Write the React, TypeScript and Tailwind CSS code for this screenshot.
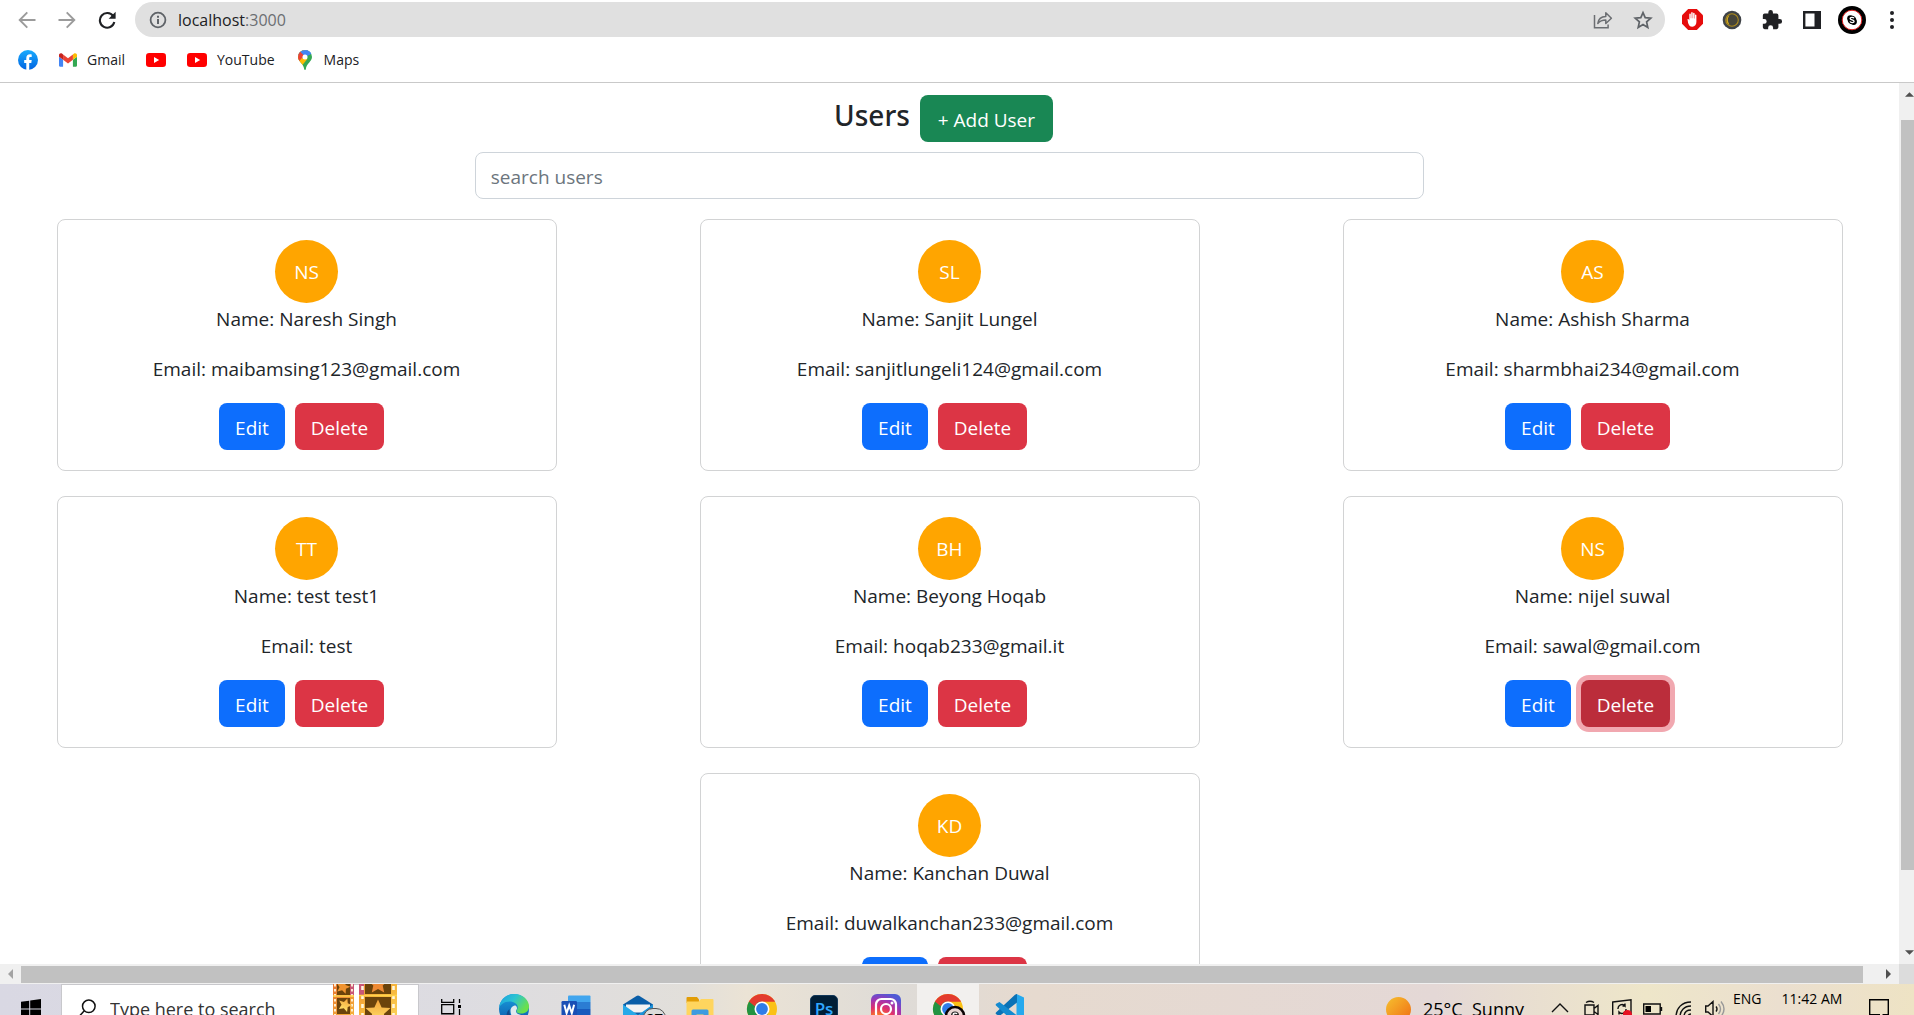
import React from "react";

type User = { initials: string; name: string; email: string; focused?: boolean };

const users: User[] = [
  { initials: "NS", name: "Naresh Singh", email: "maibamsing123@gmail.com" },
  { initials: "SL", name: "Sanjit Lungel", email: "sanjitlungeli124@gmail.com" },
  { initials: "AS", name: "Ashish Sharma", email: "sharmbhai234@gmail.com" },
  { initials: "TT", name: "test test1", email: "test" },
  { initials: "BH", name: "Beyong Hoqab", email: "hoqab233@gmail.it" },
  { initials: "NS", name: "nijel suwal", email: "sawal@gmail.com", focused: true },
  { initials: "KD", name: "Kanchan Duwal", email: "duwalkanchan233@gmail.com" },
];

/* ---------- browser icons ---------- */

function BackIcon({ flip = false }: { flip?: boolean }) {
  return (
    <svg viewBox="0 0 18 18" className={flip ? "size-[18px] -scale-x-100" : "size-[18px]"} fill="none" stroke="#9b9b9b" strokeWidth="1.9">
      <path d="M17.5 9H2M9.3 1.4 1.7 9l7.6 7.6" />
    </svg>
  );
}

function ReloadIcon() {
  return (
    <svg viewBox="0 0 18 18" className="size-[18px]">
      <path d="M15.2 5.2A7.3 7.3 0 1 0 16.3 11" fill="none" stroke="#1f2124" strokeWidth="2.1" />
      <path d="M17.6.8v7h-7z" fill="#1f2124" />
    </svg>
  );
}

function InfoIcon() {
  return (
    <svg viewBox="0 0 18 18" className="size-[18px]" fill="none" stroke="#5f6368" strokeWidth="1.8">
      <circle cx="9" cy="9" r="7.4" />
      <path d="M9 8v5M9 4.8v1.9" strokeWidth="2" />
    </svg>
  );
}

function ShareIcon() {
  return (
    <svg viewBox="0 0 20 20" className="size-5" fill="none" stroke="#6b6e72" strokeWidth="1.5">
      <path d="M1.500 5v12.800h13.600v-3.200" />
      <path d="M4.800 13.500c.5-4.600 3.500-7 8-7.100V2.800l5.600 5.400-5.600 5.300V10c-3.600 0-6 1-8 3.500z" strokeLinejoin="round" />
    </svg>
  );
}

function StarIcon() {
  return (
    <svg viewBox="0 0 20 20" className="size-5" fill="none" stroke="#5f6368" strokeWidth="1.7">
      <path d="m10 2.600 2.200 5.100 5.600.5-4.200 3.700 1.200 5.500L10 14.500l-4.800 2.900 1.200-5.500-4.200-3.700 5.600-.5z" />
    </svg>
  );
}

function AdBlockIcon() {
  return (
    <svg viewBox="0 0 21 21" className="size-[21px]">
      <path d="M6.200 0h8.600L21 6.200v8.600L14.800 21H6.200L0 14.800V6.200z" fill="#e60c0c" />
      <path d="M5.500 10.200c.7-.5 1.400.2 1.800 1.200V5.200c0-1.100 1.400-1.100 1.500 0v4h.4V3.900c0-1.100 1.500-1.100 1.500 0v5.300h.4V4.500c0-1 1.500-1 1.500 0v5h.4V6.200c0-1 1.400-1 1.400 0v6.600c0 3-1.500 4.900-4 4.900-2.800 0-3.400-1.600-4.300-3.700z" fill="#fff" />
    </svg>
  );
}

function MoonIcon() {
  return (
    <svg viewBox="0 0 20 20" className="size-5">
      <circle cx="10" cy="10" r="9.300" fill="#3f4347" />
      <circle cx="10" cy="10" r="6.300" fill="#45443a" stroke="#b08d1c" strokeWidth="1.100" />
      <path d="M7.500 5.200a5.300 5.300 0 0 0 0 9.600 8.500 8.500 0 0 1 0-9.600z" fill="#d0a71e" />
    </svg>
  );
}

function PuzzleIcon() {
  return (
    <svg viewBox="0 0 24 24" className="size-[22px]" fill="#202124">
      <path d="M20.500 11H19V7a2 2 0 0 0-2-2h-4V3.500a2.500 2.500 0 0 0-5 0V5H4a2 2 0 0 0-2 2v3.800h1.500a2.700 2.700 0 0 1 0 5.400H2V20a2 2 0 0 0 2 2h3.800v-1.500a2.700 2.700 0 0 1 5.400 0V22H17a2 2 0 0 0 2-2v-4h1.500a2.500 2.500 0 0 0 0-5z" />
    </svg>
  );
}

function PanelIcon() {
  return (
    <svg viewBox="0 0 18 18" className="size-[18px]">
      <path d="M1.200 1.200h15.600v15.600H1.200z" fill="#fff" stroke="#202124" strokeWidth="2.400" />
      <path d="M11.500 0H18v18h-6.500z" fill="#202124" />
    </svg>
  );
}

function ProfileIcon() {
  return (
    <svg viewBox="0 0 28 28" className="size-7">
      <circle cx="14" cy="14" r="14" fill="#000" />
      <circle cx="14" cy="14" r="9.800" fill="#fff" stroke="#e02020" strokeWidth="1" />
      <circle cx="12.300" cy="12.300" r="3.100" fill="#000" />
      <circle cx="15.800" cy="15.800" r="3.100" fill="#000" />
      <circle cx="14" cy="14" r="4.300" fill="#000" />
      <path d="M16 12.300c-.6-1.300-3.900-1.200-3.900.3 0 1.700 4 .9 4 2.800 0 1.500-3.600 1.500-4.100 0" fill="none" stroke="#fff" strokeWidth="1.300" />
    </svg>
  );
}

function FacebookIcon() {
  return (
    <svg viewBox="0 0 20 20" className="size-5">
      <defs>
        <linearGradient id="fb" x2="0" y2="1">
          <stop stopColor="#19acfe" />
          <stop offset="1" stopColor="#0163e0" />
        </linearGradient>
      </defs>
      <circle cx="10" cy="10" r="10" fill="url(#fb)" />
      <path d="M8.300 20v-7H6.200v-2.900h2.100V8.300c0-2.700 1.300-4 3.700-4 .7 0 1.300.1 1.700.2v2.400h-1.200c-1 0-1.300.5-1.300 1.400v1.800h2.500l-.4 2.900h-2.100v7z" fill="#fff" />
    </svg>
  );
}

function GmailIcon() {
  return (
    <svg viewBox="52 42 88 66" className="h-[14px] w-[18px]">
      <path fill="#4285f4" d="M58 108h14V74L52 59v43c0 3.320 2.690 6 6 6" />
      <path fill="#34a853" d="M120 108h14c3.320 0 6-2.690 6-6V59l-20 15" />
      <path fill="#fbbc04" d="M120 48v26l20-15v-8c0-7.420-8.470-11.650-14.400-7.200" />
      <path fill="#ea4335" d="M72 74V48l24 18 24-18v26L96 92" />
      <path fill="#c5221f" d="M52 51v8l20 15V48l-5.600-4.200c-5.940-4.450-14.400-.22-14.400 7.200" />
    </svg>
  );
}

function YouTubeIcon() {
  return (
    <svg viewBox="0 0 20 14" className="h-[14px] w-5">
      <rect width="20" height="14" rx="3.200" fill="#f00" />
      <path d="M8 4v6l5.200-3z" fill="#fff" />
    </svg>
  );
}

function MapsIcon() {
  return (
    <svg viewBox="0 0 14 20" className="h-5 w-[14px]">
      <defs>
        <clipPath id="pin">
          <path d="M7 0a7 7 0 0 1 7 7c0 4.500-5.600 6.500-6.200 12.300 0 .9-1.500.9-1.600 0C5.600 13.500 0 11.500 0 7a7 7 0 0 1 7-7z" />
        </clipPath>
      </defs>
      <g clipPath="url(#pin)">
        <path d="M0 0h14v20H0z" fill="#34a853" />
        <path d="M0 14.500 13 0H0z" fill="#fbbc04" />
        <path d="M0 0h14v3L7 7 5 9 0 5z" fill="#4285f4" />
        <path d="m0 2 2-.5 4 4L1 11.500H0z" fill="#ea4335" />
        <path d="M14 3.500V0H8l1 5-2 2z" fill="#4285f4" />
        <path d="m1 12 4-4.500 4.500 1.300L4 15.500z" fill="#fbbc04" />
      </g>
      <circle cx="7" cy="7" r="2.500" fill="#fff" />
    </svg>
  );
}

/* ---------- taskbar icons ---------- */

function WindowsIcon() {
  return (
    <svg viewBox="0 0 20 20" className="size-5" fill="#000">
      <path d="M0 2.800 8.200 1.700v7.800H0zM9.200 1.500 20 0v9.500H9.200zM0 10.500h8.200v7.800L0 17.200zM9.200 10.500H20V20L9.200 18.500z" />
    </svg>
  );
}

function SearchIcon() {
  return (
    <svg viewBox="0 0 18 20" className="h-5 w-[18px]" fill="none" stroke="#111" strokeWidth="1.500">
      <circle cx="10.800" cy="7.300" r="6.300" />
      <path d="M6.300 11.800 .6 18" />
    </svg>
  );
}

const starPoints = "0,-10 2.9,-3.600 10,-3.200 4.700,1.500 6.200,8.500 0,4.900 -6.200,8.500 -4.700,1.500 -10,-3.200 -2.900,-3.600";

function FilmStrip() {
  return (
    <svg viewBox="0 0 64 50" className="h-[50px] w-16">
      <defs>
        <linearGradient id="film" x2="1" y2="1">
          <stop stopColor="#e8732e" />
          <stop offset=".5" stopColor="#f6b53c" />
          <stop offset="1" stopColor="#ffe066" />
        </linearGradient>
        <linearGradient id="filmStar" x2="0" y2="1">
          <stop stopColor="#f3a23a" />
          <stop offset="1" stopColor="#ffe46b" />
        </linearGradient>
      </defs>
      <path d="M0 0h21v50H0zM26 0h38v50H26z" fill="url(#film)" />
      <path d="M17 0h4v11h-4zM26 0h5v12h-5z" fill="#c95776" />
      <path d="M4 0h13v11H4zM4 14h13v16H4zM32 0h26v10H32zM32 13h26v24H32z" fill="#6b430b" />
      <path d="M2 0v50M19 0v50" stroke="#fff7dd" strokeWidth="1.800" strokeDasharray="2.500 2.500" />
      <path d="M29.500 2v48M60.500 2v48" stroke="#fff7dd" strokeWidth="2.600" strokeDasharray="4 5" />
      <polygon points={starPoints} transform="translate(10 3) scale(.7) rotate(15)" fill="#f0932f" />
      <polygon points={starPoints} transform="translate(12 21) scale(.7) rotate(20)" fill="url(#filmStar)" />
      <polygon points={starPoints} transform="translate(45 0) scale(1)" fill="#ee8a34" />
      <polygon points={starPoints} transform="translate(45 28) scale(1.250)" fill="url(#filmStar)" />
      <path d="M0 12h21M26 11.500h38" stroke="#ffd24a" strokeWidth="1.500" />
    </svg>
  );
}

function TaskViewIcon() {
  return (
    <svg viewBox="0 0 20 20" className="size-5" fill="none" stroke="#000" strokeWidth="1.300">
      <path d="M.7 0v3.300h12V0M.7 5.700h12v9H.7zM.7 20v-3.500h12V20M18.500 0v4M18.500 10v10" />
      <path d="M17 6h3v3h-3z" fill="#000" stroke="none" />
    </svg>
  );
}

function EdgeIcon() {
  return (
    <svg viewBox="0 0 30 30" className="size-[30px]">
      <defs>
        <linearGradient id="edgeTop" x2="1" y2=".5">
          <stop stopColor="#1b9de2" />
          <stop offset=".5" stopColor="#2bc3d2" />
          <stop offset="1" stopColor="#6be04a" />
        </linearGradient>
        <linearGradient id="edgeSide" x2="0" y2="1">
          <stop stopColor="#1aa0e0" />
          <stop offset="1" stopColor="#0c56a8" />
        </linearGradient>
      </defs>
      <circle cx="15" cy="15" r="15" fill="url(#edgeSide)" />
      <path d="M0 14C1 5 7.500 0 15 0c9 0 15 6 15 12.500 0 4.500-3.500 7-7.500 7-4 0-5-1.500-5-2.500s1.200-1.700 1.200-4C18.700 10 15 7.500 10.500 7.500 5 7.500 1 11 0 14z" fill="url(#edgeTop)" />
      <path d="M11.500 17c0-4 3-5.500 5-5.500 1.500 1 2 3 1 4.200-1.500 2 0 4.500 5.500 5.500l5 1-5 5c-7 .5-11.500-4.500-11.500-10.200z" fill="#dfe9ee" />
      <path d="M10.500 15c-1 8 5 13 12 12a15 15 0 0 1-9 3C8 28 5 20 10.500 15z" fill="#114a8b" />
    </svg>
  );
}

function WordIcon() {
  return (
    <svg viewBox="0 0 30 30" className="size-[30px]">
      <path d="M8 1.500h20.500a1 1 0 0 1 1 1V8H7V2.500a1 1 0 0 1 1-1z" fill="#41a5ee" />
      <path d="M7 8h22.500v7H7z" fill="#2b7cd3" />
      <path d="M7 15h22.500v7H7z" fill="#185abd" />
      <path d="M7 22h22.500v6H7z" fill="#103f91" />
      <rect x=".5" y="7" width="15.500" height="16" rx="1.300" fill="#1a4fb5" />
      <path d="m3.300 10.800 2.300 8.400 2.600-7.700 2.600 7.700 2.300-8.400" fill="none" stroke="#fff" strokeWidth="2" />
    </svg>
  );
}

function MailIcon() {
  return (
    <span className="relative block size-[30px]">
      <svg viewBox="0 0 30 30" className="size-[30px]">
        <path d="M0 10.500 13.500 2a3 3 0 0 1 3 0L30 10.500V27H0z" fill="#0a5ea8" />
        <path d="M3 10.500h24v8H3z" fill="#f3f3f3" />
        <path d="M0 10.500 15 21 30 10.500V27H0z" fill="#27a9e8" />
        <path d="M30 10.500 8 27h22z" fill="#1c8fd6" />
      </svg>
      <span className="absolute left-5 top-[14px] flex h-[20px] w-[23px] items-center justify-center rounded-full border border-[#555] bg-[#dcdcda] text-[15px] font-semibold leading-4 text-black">
        27
      </span>
    </span>
  );
}

function FolderIcon() {
  return (
    <svg viewBox="0 0 30 30" className="size-[30px]">
      <path d="M1.500 4a1 1 0 0 1 1-1H12l2 2.500V9H1.500z" fill="#e29d06" />
      <path d="M1.500 7.500h12L16 5h11.500a1 1 0 0 1 1 1v20h-27z" fill="#ffd55e" />
      <path d="M6.500 26V17a1.500 1.500 0 0 1 1.500-1.500h14a1.500 1.500 0 0 1 1.500 1.500v9h-5v-5.500h-7V26z" fill="#3d9be0" />
    </svg>
  );
}

function ChromeIcon({ badge = false }: { badge?: boolean }) {
  return (
    <svg viewBox="0 0 30 30" className="size-[30px] overflow-visible">
      <circle cx="15" cy="15" r="15" fill="#fbc116" />
      <path d="M15 15 2 7.500A15 15 0 0 1 28 7.500H15z" fill="#e33b2e" />
      <path d="M2 7.500A15 15 0 0 0 15 30l6.500-11.500L15 15z" fill="#229342" />
      <path d="M2 7.500 8.500 18.700 15 15V7.500z" fill="#229342" />
      <path d="M2 7.500C7 0 23 0 28 7.500H15a7.500 7.500 0 0 0-7 5z" fill="#e33b2e" />
      <circle cx="15" cy="15" r="7.500" fill="#fff" />
      <circle cx="15" cy="15" r="5.900" fill="#2f7de8" />
      {badge && (
        <>
          <circle cx="22" cy="22" r="9" fill="#e9d5d3" stroke="#0b0405" strokeWidth="2.600" />
          <circle cx="22" cy="21.500" r="4" fill="#222" />
          <path d="M24 20c-.6-1.300-3.900-1.200-3.900.3 0 1.700 4 .9 4 2.800" fill="none" stroke="#fff" strokeWidth="1.200" />
        </>
      )}
    </svg>
  );
}

function PhotoshopIcon() {
  return (
    <span className="flex size-7 items-center justify-center rounded-[5px] border border-[#12385a] bg-[#001e36] text-[17px] font-semibold leading-6 text-[#31a8ff]">
      Ps
    </span>
  );
}

function InstagramIcon() {
  return (
    <svg viewBox="0 0 30 30" className="size-[30px]">
      <defs>
        <radialGradient id="ig" cx=".25" cy="1.050" r="1.100">
          <stop stopColor="#ffd94f" />
          <stop offset=".3" stopColor="#fa7e1e" />
          <stop offset=".55" stopColor="#e1306c" />
          <stop offset=".8" stopColor="#9b36b7" />
          <stop offset="1" stopColor="#4f5bd5" />
        </radialGradient>
      </defs>
      <rect width="30" height="30" rx="6" fill="url(#ig)" />
      <g fill="none" stroke="#fff" strokeWidth="2.200">
        <rect x="5" y="5" width="20" height="20" rx="5.500" />
        <circle cx="15" cy="15" r="5" />
      </g>
      <circle cx="21" cy="9" r="1.500" fill="#fff" />
    </svg>
  );
}

function VSCodeIcon() {
  return (
    <svg viewBox="0 0 30 30" className="size-[30px]">
      <path d="M21.500 0 29 3.500v23L21.500 30z" fill="#25a9ee" />
      <path d="M22 0v8.500L4.500 22 1.200 20.300q-1.100-1 0-2L20 .8q1-.8 2-.8z" fill="#0a72b6" />
      <path d="M22 30v-8.500L4.500 8 1.200 9.700q-1.100 1 0 2L20 29.200q1 .8 2 .8z" fill="#148bd0" />
    </svg>
  );
}

function TrayIcon({ children }: { children: React.ReactNode }) {
  return (
    <svg viewBox="0 0 20 20" className="size-5" fill="none" stroke="#111" strokeWidth="1.400">
      {children}
    </svg>
  );
}

/* ---------- parts ---------- */

function ToolButton({ label, children }: { label: string; children: React.ReactNode }) {
  return (
    <button aria-label={label} className="flex w-10 items-center justify-center">
      {children}
    </button>
  );
}

function Toolbar() {
  return (
    <div className="flex h-[39px] shrink-0 items-center pl-[18px] pr-0.5">
      <div className="flex items-center gap-[22px] pr-[19px]">
        <button aria-label="Back"><BackIcon /></button>
        <button aria-label="Forward"><BackIcon flip /></button>
        <button aria-label="Reload"><ReloadIcon /></button>
      </div>
      <div className="flex h-[35px] flex-1 items-center rounded-full bg-[#e0e0e0] pl-3.5 pr-3">
        <button aria-label="Site information"><InfoIcon /></button>
        <span className="flex-1 pl-[11px] text-[16px] leading-6 text-[#202124]">
          localhost<span className="text-[#6b6e72]">:3000</span>
        </span>
        <div className="flex gap-5">
          <button aria-label="Share"><ShareIcon /></button>
          <button aria-label="Bookmark"><StarIcon /></button>
        </div>
      </div>
      <div className="flex items-center pl-[7px]">
        <ToolButton label="Ad blocker"><AdBlockIcon /></ToolButton>
        <ToolButton label="Dark mode"><MoonIcon /></ToolButton>
        <ToolButton label="Extensions"><PuzzleIcon /></ToolButton>
        <ToolButton label="Side panel"><PanelIcon /></ToolButton>
        <ToolButton label="Profile"><ProfileIcon /></ToolButton>
        <ToolButton label="Menu">
          <span className="flex flex-col gap-[3px]">
            <i className="size-1 rounded-full bg-[#202124]" />
            <i className="size-1 rounded-full bg-[#202124]" />
            <i className="size-1 rounded-full bg-[#202124]" />
          </span>
        </ToolButton>
      </div>
    </div>
  );
}

function Bookmarks() {
  return (
    <nav className="flex h-[44px] shrink-0 items-center gap-[21px] border-b border-[#c9c9c9] px-[18px] pb-px text-sm leading-5 text-[#202124]">
      <a href="#facebook" aria-label="Facebook"><FacebookIcon /></a>
      <a href="#gmail" className="flex items-center gap-2.5"><GmailIcon />Gmail</a>
      <a href="#youtube" aria-label="YouTube"><YouTubeIcon /></a>
      <a href="#youtube-home" className="flex items-center gap-2.5"><YouTubeIcon />YouTube</a>
      <a href="#maps" className="flex items-center gap-3 pl-0.5"><MapsIcon />Maps</a>
    </nav>
  );
}

function UserCard({ user }: { user: User }) {
  return (
    <article className="flex w-[500px] flex-col items-center rounded-lg border border-[#d2d3d4] p-5">
      <div className="flex size-[63px] items-center justify-center rounded-full bg-[#ffa500] text-white">{user.initials}</div>
      <p className="mb-[18px]">Name: {user.name}</p>
      <p className="mb-[18px]">Email: {user.email}</p>
      <div className="flex">
        <button className="mr-2.5 h-[47px] w-[66px] rounded-lg bg-[#0d6efd] pt-0.5 text-white">Edit</button>
        <button
          className={
            user.focused
              ? "mr-2.5 h-[47px] w-[89px] rounded-lg bg-[#bb2d3b] pt-0.5 text-white ring-[5px] ring-[#f1a8b0]"
              : "mr-2.5 h-[47px] w-[89px] rounded-lg bg-[#dc3545] pt-0.5 text-white"
          }
        >
          Delete
        </button>
      </div>
    </article>
  );
}

function UsersPage() {
  return (
    <main className="min-w-0 flex-1 overflow-hidden text-[19px] leading-8 text-[#212529]">
      <header className="flex items-start justify-center gap-2.5 pb-2.5 pr-3 pt-3">
        <h1 className="font-['Noto_Sans'] text-[28px] font-medium leading-10">Users</h1>
        <button className="h-[47px] w-[133px] rounded-lg bg-[#198754] pt-0.5 text-white">+ Add User</button>
      </header>
      <div className="flex justify-center">
        <input
          aria-label="Search users"
          placeholder="search users"
          className="h-[47px] w-1/2 rounded-lg border border-[#ced4da] px-[15px] pt-0.5 placeholder:text-[#6c757d]"
        />
      </div>
      <section className="-mx-[15px] flex flex-wrap justify-around gap-y-[25px] pt-5">
        {users.map((u) => (
          <UserCard key={u.email} user={u} />
        ))}
      </section>
    </main>
  );
}

function VerticalScrollbar() {
  return (
    <div className="flex w-[15px] shrink-0 flex-col bg-[#f0f0f0] pl-0.5" aria-hidden="true">
      <div className="flex h-[37px] items-start pl-1 pt-[9px]">
        <svg viewBox="0 0 10 5" className="h-[5px] w-[9px]" fill="#505050"><path d="m5 0 5 5H0z" /></svg>
      </div>
      <div className="flex-1 bg-[#c1c1c1]" />
      <div className="flex h-[94px] items-end pb-[9px] pl-1">
        <svg viewBox="0 0 10 5" className="h-[5px] w-[9px]" fill="#505050"><path d="m5 5 5-5H0z" /></svg>
      </div>
    </div>
  );
}

function HorizontalScrollbar() {
  return (
    <div className="flex h-5 shrink-0 bg-[#f0f0f0]" aria-hidden="true">
      <div className="flex w-[21px] items-center pl-2">
        <svg viewBox="0 0 5 10" className="h-2.5 w-[5px]" fill="#a3a3a3"><path d="m0 5 5-5v10z" /></svg>
      </div>
      <div className="mb-px mt-0.5 flex-1 bg-[#c1c1c1]" />
      <div className="flex w-[36px] items-center justify-end pr-2">
        <svg viewBox="0 0 5 10" className="h-2.5 w-[5px]" fill="#505050"><path d="m5 5-5-5v10z" /></svg>
      </div>
      <div className="w-[15px] bg-[#dcdcdc]" />
    </div>
  );
}

function AppTile({ label, active = false, children }: { label: string; active?: boolean; children: React.ReactNode }) {
  return (
    <button
      aria-label={label}
      className={
        active
          ? "flex h-[50px] w-[62px] items-center justify-center bg-[#f2f0ee]"
          : "flex h-[50px] w-[62px] items-center justify-center"
      }
    >
      {children}
    </button>
  );
}

function Taskbar() {
  return (
    <footer className="h-[31px] shrink-0 overflow-hidden">
      <div className="flex h-[50px] bg-[linear-gradient(90deg,#d9d8e3_0%,#dddce1_24%,#e2dfda_36%,#ebe3d5_39%,#dedbd7_47%,#e6dacf_54%,#e4d8d6_75%,#eee6c9_86%,#ebdfcf_93%,#eee3c4_100%)] text-black">
        <button aria-label="Start" className="flex w-[61px] items-center justify-center"><WindowsIcon /></button>
        <label className="flex w-[358px] items-center border border-[#c8c8cc] bg-white pl-4">
          <SearchIcon />
          <input aria-label="Search" placeholder="Type here to search" className="ml-3.5 w-[223px] text-[18px] leading-6 placeholder:text-[#333]" />
          <FilmStrip />
        </label>
        <button aria-label="Task view" className="flex w-16 items-center justify-center"><TaskViewIcon /></button>
        <AppTile label="Edge"><EdgeIcon /></AppTile>
        <AppTile label="Word"><WordIcon /></AppTile>
        <AppTile label="Mail"><MailIcon /></AppTile>
        <AppTile label="File Explorer"><FolderIcon /></AppTile>
        <AppTile label="Chrome"><ChromeIcon /></AppTile>
        <AppTile label="Photoshop"><PhotoshopIcon /></AppTile>
        <AppTile label="Instagram"><InstagramIcon /></AppTile>
        <AppTile label="Chrome window" active><ChromeIcon badge /></AppTile>
        <AppTile label="Visual Studio Code"><VSCodeIcon /></AppTile>
        <div className="ml-auto flex items-center pr-[25px]">
          <i className="size-[25px] rounded-full bg-linear-to-br from-[#f5c02f] to-[#ee6a12]" />
          <span className="w-[139px] whitespace-pre pl-3 text-[18px] leading-6">25°C  Sunny</span>
          <div className="flex items-center gap-[11px]">
            <TrayIcon><path d="m2 13 8-8 8 8" /></TrayIcon>
            <TrayIcon><path d="M4 6h9v10H4zM13 9.500l4-3v9l-4-3M5 3.500q4-2.500 8 0" /></TrayIcon>
            <TrayIcon>
              <path d="M.7 3 19 .8v17H.7zM6 10a4 4 0 0 1 7-3V4.500M13 7h-2.500M14 10a4 4 0 0 1-7 3v2.500" />
              <circle cx="15.500" cy="15.500" r="4.500" fill="#e81123" stroke="none" />
            </TrayIcon>
            <TrayIcon><path d="M.7 5h16.500v10H.7zM18.500 8v4" /><path d="M2.500 7H8v6H2.500z" fill="#000" stroke="none" /></TrayIcon>
            <TrayIcon><path d="M2 18C2 9 8 3 17 3M6 18c0-6 4-11 11-11M10 18c0-4 2-7 7-7M14 18q0-3 3-3" /></TrayIcon>
            <TrayIcon>
              <path d="M.7 7H3l5-4.500v15L3 13H.7zM11 7.500q2 2.500 0 5" />
              <path d="M13.500 5q4 5 0 10M16 2.500q6 7.500 0 15" stroke="#999" />
            </TrayIcon>
          </div>
          <span className="w-[46px] self-start pl-2 pt-1 text-sm leading-[22px]">ENG</span>
          <time className="w-[82px] self-start whitespace-nowrap pt-1 text-center text-sm leading-[22px]">11:42 AM</time>
          <button aria-label="Notifications" className="ml-4">
            <svg viewBox="0 0 20 20" className="size-5" fill="none" stroke="#000" strokeWidth="1.400"><path d="M.7.7h18.600v15h-5l-4 4v-4H.7z" /></svg>
          </button>
        </div>
      </div>
    </footer>
  );
}

export default function App() {
  return (
    <div className="flex h-screen flex-col overflow-hidden bg-white font-['Open_Sans','Noto_Sans',sans-serif]">
      <Toolbar />
      <Bookmarks />
      <div className="flex min-h-0 flex-1">
        <UsersPage />
        <VerticalScrollbar />
      </div>
      <HorizontalScrollbar />
      <Taskbar />
    </div>
  );
}
